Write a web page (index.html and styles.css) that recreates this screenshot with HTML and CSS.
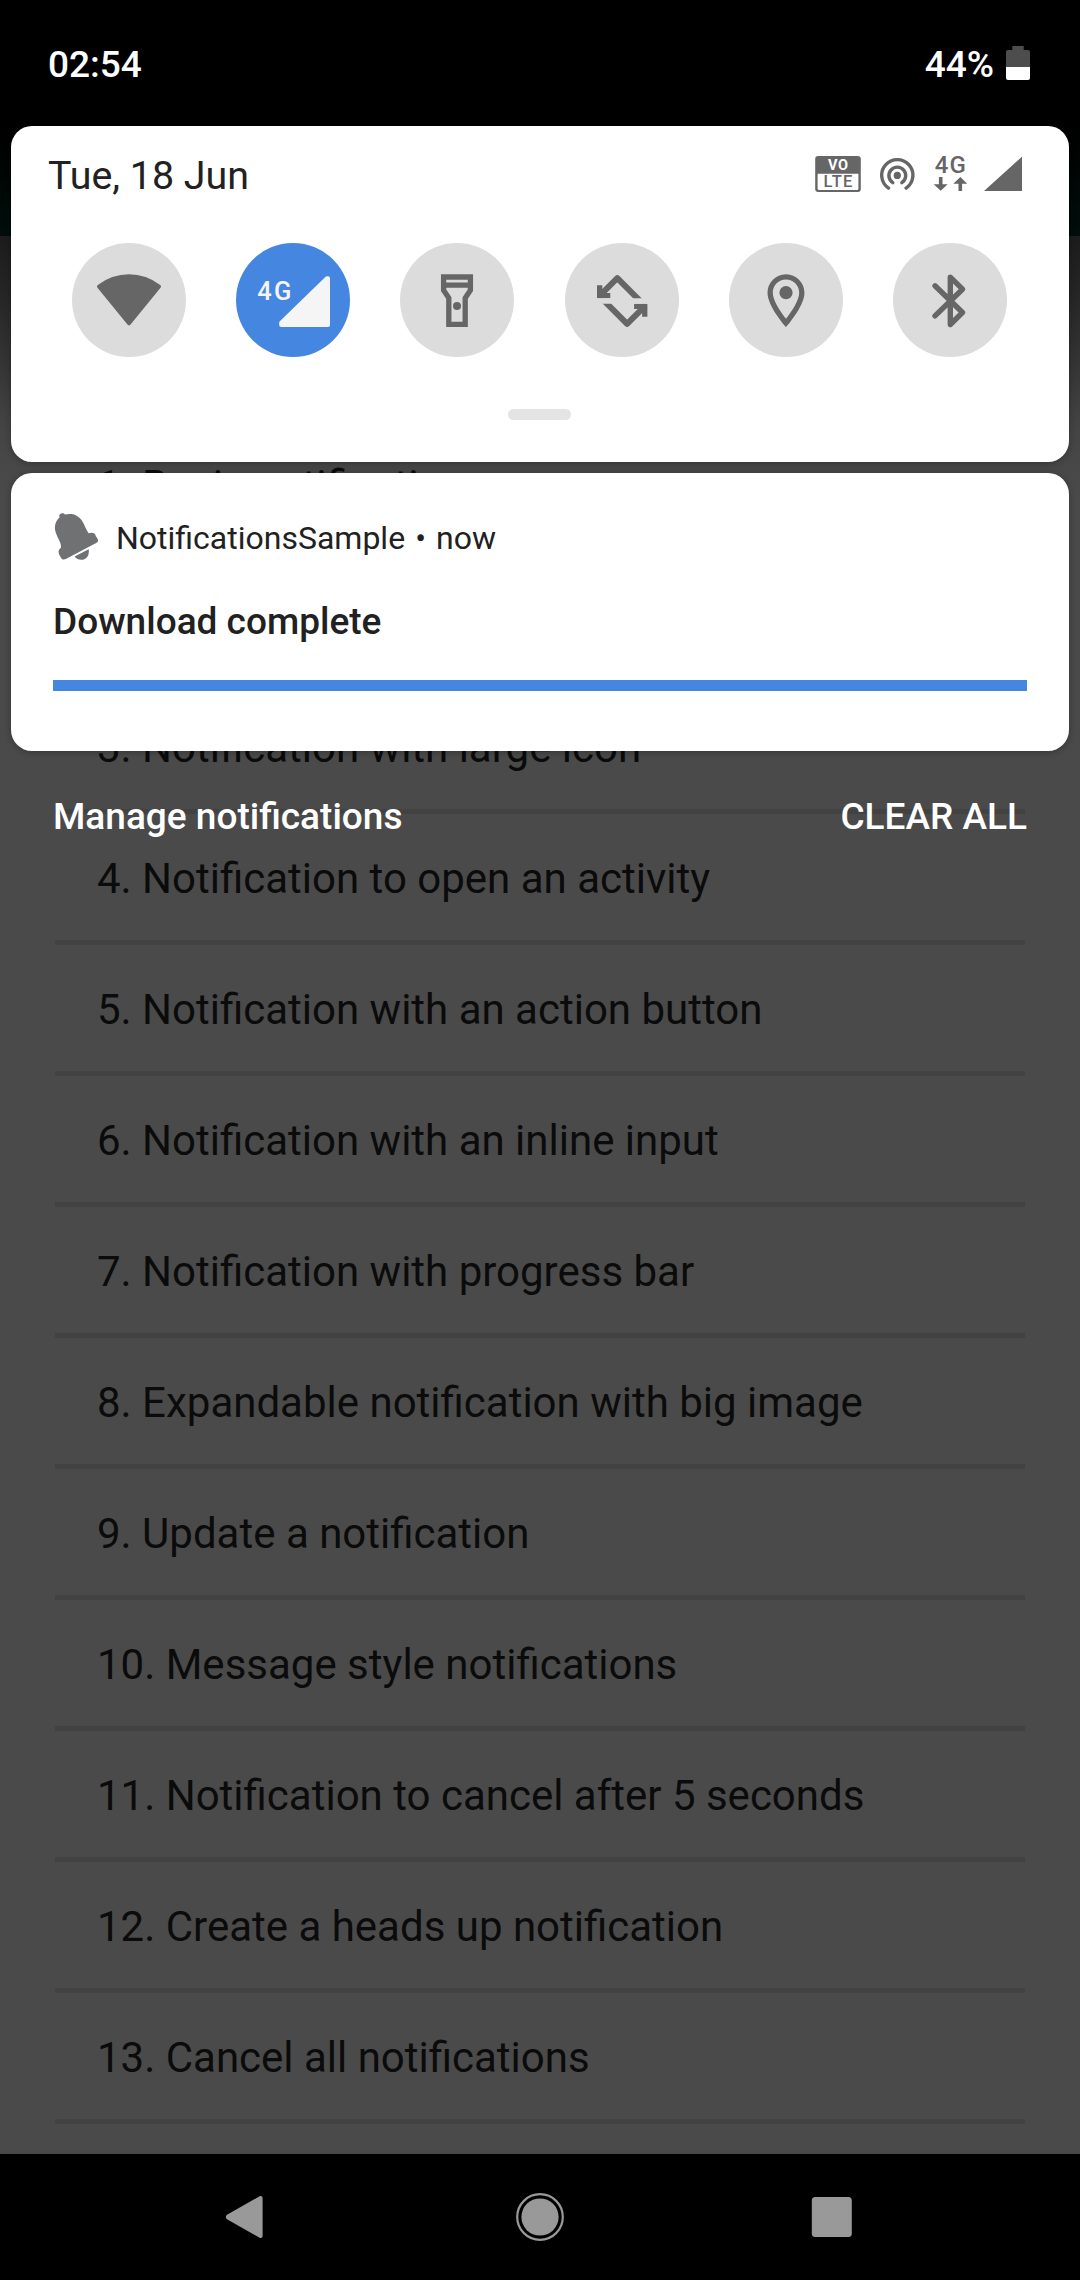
FILE: index.html
```html
<!DOCTYPE html>
<html lang="en">
<head>
<meta charset="utf-8">
<title>Notifications</title>
<link rel="stylesheet" href="styles.css">
</head>
<body>
<div class="screen">
  <div class="app">
    <div class="app-bar"></div>
    <ul class="list">
      <li class="row">1. Basic notification</li>
      <li class="row"></li>
      <li class="row">3. Notification with large icon</li>
      <li class="row">4. Notification to open an activity</li>
      <li class="row">5. Notification with an action button</li>
      <li class="row">6. Notification with an inline input</li>
      <li class="row">7. Notification with progress bar</li>
      <li class="row">8. Expandable notification with big image</li>
      <li class="row">9. Update a notification</li>
      <li class="row">10. Message style notifications</li>
      <li class="row">11. Notification to cancel after 5 seconds</li>
      <li class="row">12. Create a heads up notification</li>
      <li class="row">13. Cancel all notifications</li>
    </ul>
  </div>

  <div class="shade">
    <header class="status">
      <span>02:54</span>
      <span class="battery">44%
        <svg width="24" height="34" viewBox="0 0 24 34">
          <path d="M6.3 0H17.7V4H22a2 2 0 0 1 2 2V21H0V6a2 2 0 0 1 2-2H6.3Z" fill="#4d4d4d"/>
          <path d="M0 21H24V32a2 2 0 0 1-2 2H2a2 2 0 0 1-2-2Z" fill="#fff"/>
        </svg>
      </span>
    </header>

    <section class="quick card">
      <div class="quick-head">
        <span class="date">Tue, 18 Jun</span>
        <svg class="volte" width="46" height="47" viewBox="0 0 46 47">
          <rect x="0.2" y="4" width="45.6" height="36" rx="3" fill="#666"/>
          <path d="M2.6 21.7H43.4V36.5a1.5 1.5 0 0 1-1.5 1.5H4.1a1.5 1.5 0 0 1-1.5-1.5Z" fill="#fff"/>
          <text x="13" y="18.3" font-size="14.5" font-weight="700" textLength="20" fill="#fff">VO</text>
          <text x="8.4" y="35.3" font-size="16.5" font-weight="500" textLength="29" fill="#666">LTE</text>
        </svg>
        <svg class="hotspot" width="35" height="47" viewBox="0 0 35 47" fill="none" stroke="#666" stroke-width="3.4" stroke-linecap="round">
          <path d="M8.5 36.1A15.6 15.6 0 1 1 26.1 36.1"/>
          <path d="M12.8 30.6A8.4 8.4 0 1 1 21.8 30.6"/>
          <circle cx="17.3" cy="23.4" r="3.6" fill="#666" stroke="none"/>
        </svg>
        <svg class="data" width="34" height="47" viewBox="0 0 34 47" fill="#666">
          <text x="1.8" y="21.2" font-size="24" font-weight="500" textLength="31">4G</text>
          <path d="M5.9 25h3.6v7.2h5.2L7.7 38.8.7 32.2h5.2Z"/>
          <path d="M25.5 39h3.6v-7.2h5.1L27.3 25l-7 6.8h5.2Z"/>
        </svg>
        <svg width="38" height="47" viewBox="0 0 38 47"><path d="M0 39L38 4.7V39Z" fill="#666"/></svg>
      </div>

      <div class="tiles">
        <svg class="tile" viewBox="0 0 114 114">
          <path d="M27 43.6C36 36.8 46 33.3 57 33.3S78 36.8 87 43.6L57 80.2Z" fill="#666" stroke="#666" stroke-width="4" stroke-linejoin="round"/>
        </svg>
        <svg class="tile tile-on" viewBox="0 0 114 114" fill="#f5f5f5">
          <text x="21.3" y="57" font-size="25.5" font-weight="500" textLength="34">4G</text>
          <path d="M45.2 82V79.7L91 35.3h1V82Z" stroke="#f5f5f5" stroke-width="4" stroke-linejoin="round"/>
        </svg>
        <svg class="tile" viewBox="0 0 114 114" fill="none" stroke="#666" stroke-width="5.3">
          <path d="M43.6 34H70.4V47.3L65.2 55V81.3H48.8V55L43.6 47.3Z"/>
          <path d="M43.6 42.2H70.4"/>
          <circle cx="57" cy="63" r="4" fill="#666" stroke="none"/>
        </svg>
        <svg class="tile" viewBox="0 0 114 114">
          <defs>
            <clipPath id="half"><rect x="0" y="0" width="114" height="55.3"/></clipPath>
            <g id="turn" clip-path="url(#half)">
              <path d="M34 53.3L52.3 35.2L78 60.9" fill="none" stroke="#666" stroke-width="6" stroke-linejoin="round"/>
              <path d="M32 42.3h5.3V50h8v5.3H32Z" fill="#666"/>
            </g>
          </defs>
          <use href="#turn"/>
          <use href="#turn" transform="rotate(180 57.2 58)"/>
        </svg>
        <svg class="tile" viewBox="0 0 114 114" fill="#666">
          <path transform="translate(25.3 26) scale(2.64)" d="M12 2C8.13 2 5 5.13 5 9c0 5.25 7 13 7 13s7-7.75 7-13c0-3.87-3.13-7-7-7zM7 9c0-2.76 2.24-5 5-5s5 2.24 5 5c0 2.88-2.88 7.19-5 9.88C9.92 16.21 7 11.85 7 9z"/>
          <circle cx="57" cy="49.7" r="6.6"/>
        </svg>
        <svg class="tile" viewBox="0 0 114 114" fill="none" stroke="#666" stroke-width="5.4" stroke-linecap="round" stroke-linejoin="round">
          <path d="M42 42.8L69.5 69.5L57.3 81.5V34.2L69.5 46.2L42 72.9"/>
        </svg>
      </div>
      <div class="handle"></div>
    </section>

    <section class="note card">
      <div class="note-head">
        <svg width="45" height="48" viewBox="0 0 45 48" fill="#6f7173">
          <path d="M5.2 3.8C5.6 .9 9.6.2 11 2.6C17 .9 23.5 2.4 27.7 8.3C30.5 12.5 32 17.6 34.6 21.3C37.6 20 41.2 20.6 41.8 24L43.8 27.2C44.4 29 43.8 30.2 42.2 31L12.3 46.8C9.7 48.1 8.2 47.6 7.2 46C5.5 43.3 3.6 40.4 5.2 37.4L7 35.4C7.4 29.6 2.5 25.4 1.1 18C.3 13 2 8.2 5.5 5.4Z"/>
          <path d="M20.5 44.6L34.7 37.2C35.4 42 33.8 45.8 30.3 47.3C26.6 48.7 22.5 47.4 20.5 44.6Z"/>
        </svg>
        <span class="note-app">NotificationsSample</span><span class="dot">•</span><span>now</span>
      </div>
      <div class="note-title">Download complete</div>
      <div class="progress"></div>
    </section>

    <footer class="actions">
      <span>Manage notifications</span>
      <span>CLEAR ALL</span>
    </footer>
  </div>

  <nav class="nav">
    <svg width="48" height="54" viewBox="0 0 48 54"><path d="M6 26.6V27.4L38.6 46V8Z" fill="#999" stroke="#999" stroke-width="4" stroke-linejoin="round"/></svg>
    <svg width="48" height="54" viewBox="0 0 48 54"><circle cx="24" cy="27" r="22.8" fill="none" stroke="#999" stroke-width="2.2"/><circle cx="24" cy="27" r="18.6" fill="#999"/></svg>
    <svg width="48" height="54" viewBox="0 0 48 54"><rect x="1.8" y="7" width="40" height="40" rx="3.5" fill="#999"/></svg>
  </nav>
</div>
</body>
</html>
```
FILE: styles.css
```css
* { box-sizing: border-box; }

body {
  margin: 0;
  background: #000;
  font-family: Roboto, "Noto Sans", sans-serif;
}

svg { display: block; flex: none; }

.screen {
  width: 1080px;
  height: 2280px;
  display: grid;
  grid-template: 2154px 126px / 1080px;
}

/* The app and the notification shade share one grid cell */
.app, .shade { grid-area: 1 / 1; min-height: 0; }

.app {
  overflow: hidden;
  background: #4a4a4a;
}

.app-bar {
  height: 236px;
  background: linear-gradient(#000 126px, #010e0b);
}

.list {
  margin: 0;
  padding: 185px 55px 0;
  list-style: none;
  background: linear-gradient(#1c1c1c, #262626 60px, #343434 125px, #454545 195px, #4a4a4a 260px);
}

.row {
  height: 131px;
  padding: 3px 0 0 42px;
  border-bottom: 5px solid #424242;
  font-size: 42px;
  line-height: 123px;
  color: #0b0b0b;
  white-space: nowrap;
}

.shade { padding: 0 11px; }

.status {
  height: 126px;
  padding: 3px 39px 0 37px;
  display: flex;
  justify-content: space-between;
  align-items: center;
  font-size: 37px;
  font-weight: 500;
  color: #fff;
}

.battery {
  display: flex;
  align-items: center;
  gap: 12px;
}

.battery svg { margin-top: -3px; }

.card {
  border-radius: 21px;
  background: #fff;
  box-shadow: 0 1px 7px rgba(0, 0, 0, .3);
  color: #212121;
}

.quick {
  height: 336px;
  padding-top: 26px;
}

.quick-head {
  height: 47px;
  padding: 0 47px 0 37px;
  display: flex;
}

.date {
  margin-right: auto;
  font-size: 39.4px;
  line-height: 47px;
}

.volte { margin-right: 19px; }
.hotspot { margin-right: 18px; }
.data { margin-right: 17px; }

.tiles {
  margin-top: 44px;
  padding: 0 61.5px 0 60.5px;
  display: flex;
  justify-content: space-between;
}

.tile {
  width: 114px;
  height: 114px;
  border-radius: 50%;
  background: #dcdcdc;
}

.tile-on { background: #4586e1; }

.handle {
  width: 63px;
  height: 11px;
  margin: 52px 0 0 497px;
  border-radius: 6px;
  background: #e4e4e4;
}

.note {
  height: 278px;
  margin-top: 11px;
  padding: 39px 42px 0;
}

.note-head {
  height: 48px;
  margin-left: 1px;
  display: flex;
  align-items: center;
  font-size: 32px;
}

.note-head span { margin-top: 4px; }

.note-head .note-app { margin-left: 17px; }

.dot {
  width: 31px;
  text-align: center;
}

.note-title {
  margin-top: 40px;
  font-size: 37px;
  font-weight: 500;
  line-height: 43px;
}

.progress {
  height: 11px;
  margin-top: 37px;
  background: #4586e1;
}

.actions {
  margin-top: 44px;
  padding: 0 42px;
  display: flex;
  justify-content: space-between;
  font-size: 37px;
  font-weight: 500;
  line-height: 43px;
  color: #fff;
}

.nav {
  padding: 0 99px;
  display: grid;
  grid-template-columns: repeat(3, 1fr);
  place-items: center;
  background: #000;
}
```
